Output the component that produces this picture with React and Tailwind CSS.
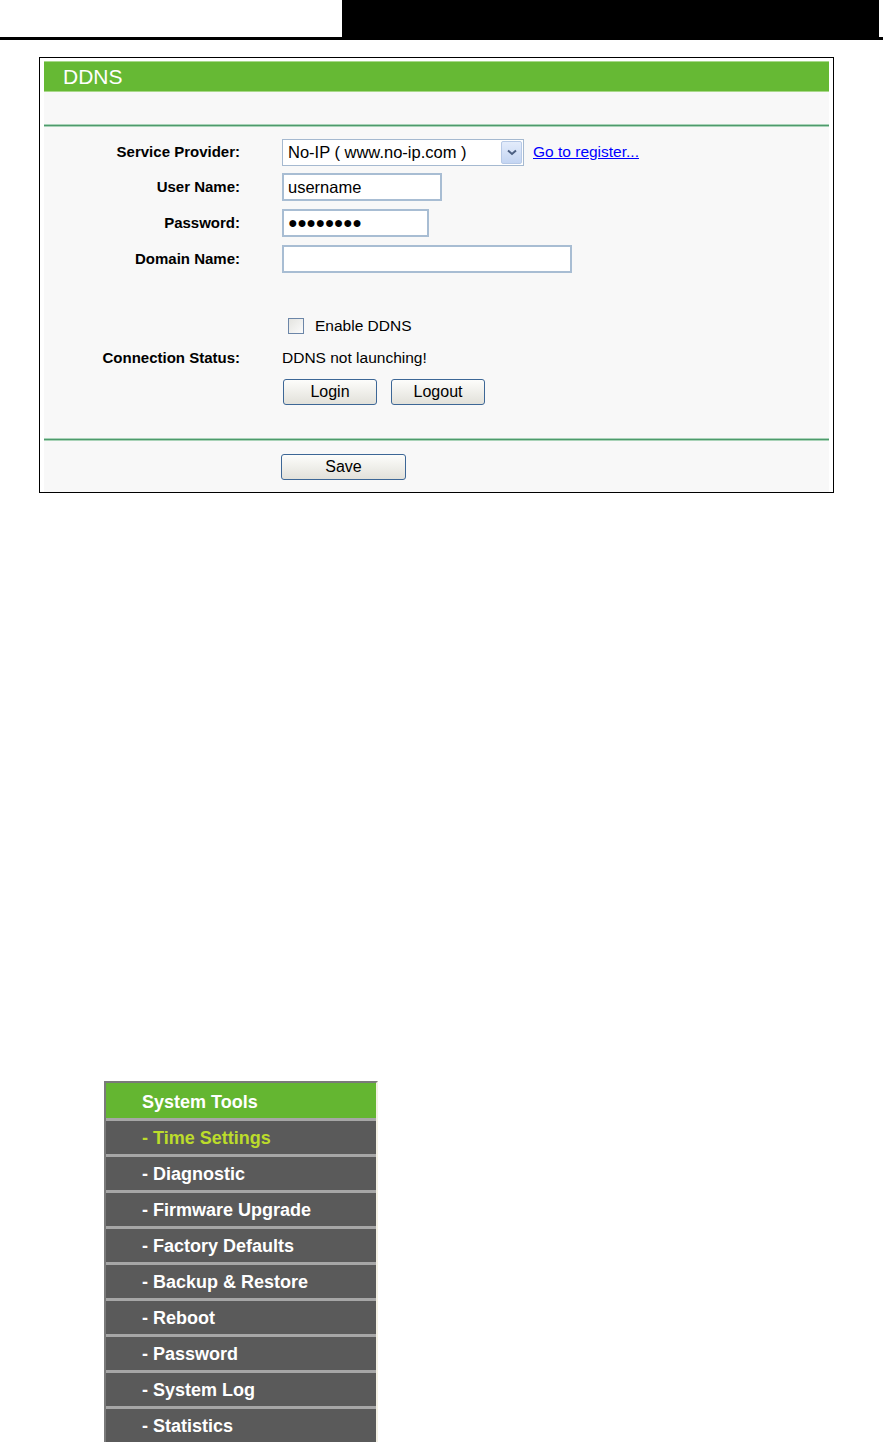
import React from "react";

const font = { fontFamily: '"Liberation Sans", Arial, sans-serif' };

const menuItems = [
  "Time Settings",
  "Diagnostic",
  "Firmware Upgrade",
  "Factory Defaults",
  "Backup & Restore",
  "Reboot",
  "Password",
  "System Log",
  "Statistics",
];

const Label = ({ children }) => (
  <div className="w-[196px] shrink-0 text-right text-[15px] font-bold text-black">{children}</div>
);

const Btn = ({ children, w }) => (
  <button
    type="button"
    className={`h-[26px] ${w} rounded-[3px] border border-[#3d6796] bg-gradient-to-b from-[#fdfdfb] to-[#e2e1da] text-[16px] text-black leading-none`}
  >
    {children}
  </button>
);

const GreenLine = () => (
  <div className="h-[3px] border-y border-[#a9d3b8] bg-[#4e9a6c]" />
);

export default function App() {
  return (
    <div className="min-h-[1445px] bg-white" style={font}>
      {/* page header */}
      <div className="flex h-[40px] border-b-[3px] border-black">
        <div className="w-[342px] bg-white" />
        <div className="w-[537px] bg-black" />
      </div>

      {/* DDNS panel */}
      <div className="ml-[39px] mt-[17px] w-[795px] border border-black bg-white px-[4px] pt-[3px]">
        <div className="flex h-[31px] items-center border-y border-[#a8d88a] bg-[#66b934] pl-[19px] text-[21px] text-white">
          DDNS
        </div>
        <div className="bg-[#f8f8f8]">
          <div className="h-[32px]" />
          <GreenLine />

          <div className="pt-[8px]">
            <div className="flex h-[34px] items-center">
              <Label>Service Provider:</Label>
              <div className="ml-[42px] flex h-[27px] w-[242px] items-center border border-[#a5b9d0] bg-white pl-[5px] text-[16.5px]">
                <span className="flex-1">No-IP ( www.no-ip.com )</span>
                <span className="mr-[1px] flex h-[23px] w-[21px] items-center justify-center rounded-[2px] border border-[#b7c9e6] bg-gradient-to-b from-[#e3ecfb] to-[#c4d5f2]">
                  <svg width="10" height="7" viewBox="0 0 10 7">
                    <path d="M1 1.5 L5 5 L9 1.5" fill="none" stroke="#4b5f82" strokeWidth="2" />
                  </svg>
                </span>
              </div>
              <a href="#" className="ml-[9px] text-[15.5px] text-[#0000ff] underline">
                Go to register...
              </a>
            </div>

            <div className="flex h-[36px] items-center">
              <Label>User Name:</Label>
              <div className="ml-[42px] flex h-[28px] w-[160px] items-center border-2 border-[#a8bdd3] bg-white pl-[4px] text-[16.5px]">
                username
              </div>
            </div>

            <div className="flex h-[36px] items-center">
              <Label>Password:</Label>
              <div className="ml-[42px] flex h-[28px] w-[147px] items-center border-2 border-[#a8bdd3] bg-white pl-[4px] text-[16px] tracking-[-0.5px]">
                ●●●●●●●●
              </div>
            </div>

            <div className="flex h-[36px] items-center">
              <Label>Domain Name:</Label>
              <div className="ml-[42px] h-[28px] w-[290px] border-2 border-[#a8bdd3] bg-white" />
            </div>

            <div className="h-[33px]" />

            <div className="flex h-[32px] items-center">
              <div className="w-[196px] shrink-0" />
              <div className="ml-[48px] h-[16px] w-[16px] border border-[#6c86a8] bg-gradient-to-br from-[#e4e4e0] to-[#fbfbfb]" />
              <span className="ml-[11px] text-[15.5px]">Enable DDNS</span>
            </div>

            <div className="flex h-[32px] items-center">
              <Label>Connection Status:</Label>
              <span className="ml-[42px] text-[15.5px]">DDNS not launching!</span>
            </div>

            <div className="flex h-[36px] items-center">
              <div className="w-[196px] shrink-0" />
              <div className="ml-[43px] flex gap-[14px]">
                <Btn w="w-[94px]">Login</Btn>
                <Btn w="w-[94px]">Logout</Btn>
              </div>
            </div>

            <div className="h-[28px]" />
          </div>

          <GreenLine />

          <div className="flex h-[51px] items-center">
            <div className="w-[196px] shrink-0" />
            <div className="ml-[41px]">
              <Btn w="w-[125px]">Save</Btn>
            </div>
          </div>
        </div>
      </div>

      {/* System Tools menu */}
      <div className="ml-[104px] mt-[588px] w-[274px] border-l-2 border-t-2 border-r-2 border-l-[#7a7a7a] border-t-[#7a7a7a] border-r-[#f3f0e4]">
        <div className="flex h-[35px] items-center bg-[#64b631] pl-[36px] pt-[3px] text-[18px] font-bold text-white">
          System Tools
        </div>
        {menuItems.map((item, i) => (
          <div
            key={item}
            className={`flex h-[36px] items-center border-t-[3px] border-[#a6a6a6] bg-[#5a5a5a] pl-[36px] pt-[1px] text-[18px] font-bold ${
              i === 0 ? "text-[#bcdc2b]" : "text-white"
            }`}
          >
            - {item}
          </div>
        ))}
      </div>
    </div>
  );
}
